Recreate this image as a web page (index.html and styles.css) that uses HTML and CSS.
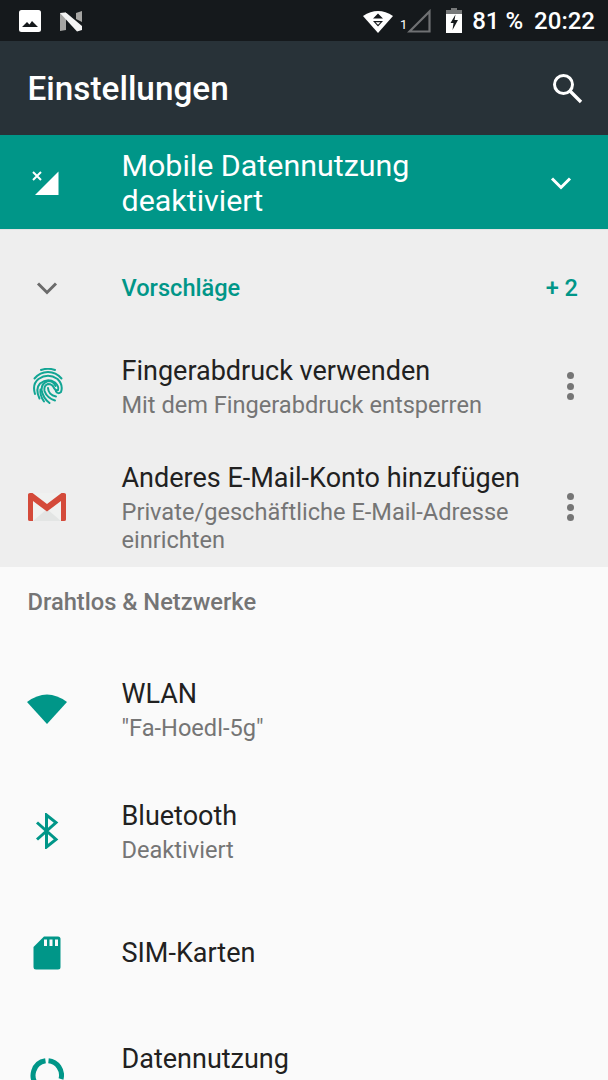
FILE: index.html
```html
<!DOCTYPE html>
<html lang="de">
<head>
    <meta charset="UTF-8">
    <meta name="viewport" content="width=device-width, initial-scale=1.0">
    <title>Einstellungen</title>
    <link rel="stylesheet" href="styles.css">
</head>
<body>
    <div class="statusbar">
        <div class="status-left">
            <svg class="st-img" width="24" height="24" viewBox="0 0 24 24">
                <rect x="1" y="1" width="22" height="22" rx="2.5" fill="#fff"/>
                <path d="M4 18l5-5 2.500 2.500 2.500-3.500 6 6z" fill="#15191c"/>
            </svg>
            <svg class="st-n" width="26" height="22" viewBox="0 0 26 22">
                <path d="M2 3l6-1v18l-6 1z" fill="#a5a5a3"/>
                <path d="M18 3l6-2v11l-6-3z" fill="#a5a5a3"/>
                <path d="M2 3h6.500l15.500 13v4l-5 1.500z" fill="#f4f4f4"/>
            </svg>
        </div>
        <div class="status-right">
            <svg width="30" height="24" viewBox="0 0 30 24">
                <path d="M0 7Q15-3 30 7L15 24z" fill="#fff"/>
                <path d="M15 4.500l5 5H10zM10 12h10l-5 5.500z" fill="#15191c"/>
                <path d="M12.500 13.200h5L15 15.800z" fill="#fff"/>
            </svg>
            <span class="sim-no">1</span>
            <svg class="st-signal" width="24" height="24" viewBox="0 0 24 24">
                <path d="M2.500 22.500L22.500 2.500v20z" fill="none" stroke="#6f7173" stroke-width="2.200"/>
            </svg>
            <svg class="st-batt" width="16" height="25" viewBox="0 0 16 25">
                <path d="M5 0h6v2h5v6H0V2h5z" fill="#77797a"/>
                <rect y="6" width="16" height="19" fill="#fff"/>
                <path d="M9.500 6.500L4.500 15h3l-1 7 5.500-10H8.500z" fill="#15191c"/>
            </svg>
            <span class="st-text st-pct">81 %</span>
            <span class="st-text st-time">20:22</span>
        </div>
    </div>

    <div class="appbar">
        <h1>Einstellungen</h1>
        <svg width="34" height="34" viewBox="0 0 34 34">
            <circle cx="13.500" cy="13.500" r="9" fill="none" stroke="#fff" stroke-width="3"/>
            <path d="M20 20l11 11" stroke="#fff" stroke-width="3.400"/>
        </svg>
    </div>

    <div class="condition">
        <div class="icon-col">
            <svg width="28" height="26" viewBox="0 0 28 26">
                <path d="M26.500 1.500v23.500H3z" fill="#fff"/>
                <path d="M1 2l8 8M9 2l-8 8" stroke="#fff" stroke-width="2"/>
            </svg>
        </div>
        <div class="condition-text">Mobile Datennutzung<br>deaktiviert</div>
        <svg class="condition-chevron" width="22" height="14" viewBox="0 0 22 14">
            <path d="M2 2.500l9 9 9-9" fill="none" stroke="#fff" stroke-width="3"/>
        </svg>
    </div>

    <div class="suggestions">
        <div class="sugg-head">
            <div class="icon-col">
                <svg width="22" height="14" viewBox="0 0 22 14">
                    <path d="M2 2.500l9 9 9-9" fill="none" stroke="#6b6b6b" stroke-width="3"/>
                </svg>
            </div>
            <div class="sugg-label">Vorschläge</div>
            <div class="sugg-count">+ 2</div>
        </div>

        <div class="row sugg-row sugg-finger">
            <div class="icon-col">
                <svg width="30" height="36" viewBox="0 0 30 36" fill="none" stroke="#12a594" stroke-width="2" stroke-linecap="round">
                    <path d="M8 2Q15 -.5 22 2"/>
                    <path d="M1.500 10.500Q7 4 15 4T28.500 10.500"/>
                    <path d="M2 26Q-1 16 5.500 11 15 4.500 24.500 11 30.500 17 28 24 25 26.500 23 23.500"/>
                    <path d="M6.500 30.500Q2 21 7 15.500 14.500 9.500 22 14.500 26.500 19 25 22 22.500 23 21 20 19.500 16 15 16 10.500 17.500 11.500 23 14 30 22 32.500"/>
                    <path d="M11 33.500Q6.500 27 7.500 21.500"/>
                    <path d="M16.500 35Q10 30 8.500 22 8.500 15 15 13 20.500 13 22.500 18"/>
                    <path d="M15 20Q15.500 27 23 28.500"/>
                </svg>
            </div>
            <div class="row-text">
                <div class="row-title">Fingerabdruck verwenden</div>
                <div class="row-sub">Mit dem Fingerabdruck entsperren</div>
            </div>
            <div class="dots"><i></i><i></i><i></i></div>
        </div>

        <div class="row sugg-row sugg-mail">
            <div class="icon-col">
                <svg width="38" height="28" viewBox="0 0 38 28">
                    <rect x="0" y="0" width="38" height="28" rx="1.500" fill="#f0f1f0"/>
                    <path d="M5 28L19 16l14 12z" fill="#e3e5e4"/>
                    <path d="M0 1.500Q0 0 2 0h2.500L19 11 33.500 0H36q2 0 2 1.500V26.500q0 1.500-2 1.500h-3V8L19 18.500 5 8v20H2q-2 0-2-1.500z" fill="#d44a3a"/>
                </svg>
            </div>
            <div class="row-text">
                <div class="row-title">Anderes E-Mail-Konto hinzufügen</div>
                <div class="row-sub">Private/geschäftliche E-Mail-Adresse<br>einrichten</div>
            </div>
            <div class="dots"><i></i><i></i><i></i></div>
        </div>
    </div>

    <div class="section-head">Drahtlos &amp; Netzwerke</div>

    <div class="row list-row row-wlan">
        <div class="icon-col">
            <svg width="40" height="32" viewBox="0 0 40 32">
                <path d="M0 9Q20-6 40 9L20 31z" fill="#009688"/>
            </svg>
        </div>
        <div class="row-text">
            <div class="row-title">WLAN</div>
            <div class="row-sub">"Fa-Hoedl-5g"</div>
        </div>
    </div>

    <div class="row list-row row-bt">
        <div class="icon-col">
            <svg width="24" height="36" viewBox="0 0 24 36">
                <path d="M2 9.500l19 17L11.500 34V2L21 9.500 2 26.500" fill="none" stroke="#009688" stroke-width="3"/>
            </svg>
        </div>
        <div class="row-text">
            <div class="row-title">Bluetooth</div>
            <div class="row-sub">Deaktiviert</div>
        </div>
    </div>

    <div class="row list-row row-sim">
        <div class="icon-col">
            <svg width="28" height="34" viewBox="0 0 28 34">
                <path d="M11 .5h14q2.500 0 2.500 2.500v28q0 2.500-2.500 2.500H3q-2.500 0-2.500-2.500V11z" fill="#009688"/>
                <path d="M11 3.500h3v6.500h-3zM16.500 3.500h3v6.500h-3zM22 3.500h3v6.500h-3z" fill="#fafafa"/>
            </svg>
        </div>
        <div class="row-text">
            <div class="row-title">SIM-Karten</div>
        </div>
    </div>

    <div class="row list-row row-data">
        <div class="icon-col">
            <svg width="34" height="34" viewBox="0 0 34 34" fill="none" stroke="#009688" stroke-width="5">
                <path d="M15.500 2.800A14.500 14.500 0 0 0 8 28"/>
                <path d="M18.500 2.800A14.500 14.500 0 0 1 31 21"/>
            </svg>
        </div>
        <div class="row-text">
            <div class="row-title">Datennutzung</div>
        </div>
    </div>
</body>
</html>
```

FILE: styles.css
```css
/* General styles */
html, body {
    margin: 0;
    padding: 0;
    height: 1080px;
    overflow: hidden;
}
body {
    font-family: Roboto, sans-serif;
    background-color: #fafafa;
    color: #212121;
}
svg {
    display: block;
}

/* Status bar */
.statusbar {
    height: 41px;
    background-color: #15191c;
    display: flex;
    justify-content: space-between;
    align-items: center;
    padding: 0 13px 0 18px;
}
.status-left, .status-right {
    display: flex;
    align-items: center;
}
.st-n {
    margin-left: 16px;
}
.sim-no {
    color: #fff;
    font-size: 13px;
    margin: 8px 0 0 7px;
}
.st-batt {
    margin-left: 15px;
}
.st-text {
    color: #fff;
    font-size: 24px;
    font-weight: 500;
}
.st-pct {
    margin-left: 10px;
}
.st-time {
    margin-left: 11px;
}

/* App bar */
.appbar {
    height: 94px;
    background-color: #283238;
    display: flex;
    justify-content: space-between;
    align-items: center;
    padding: 0 24px 0 27.500px;
    box-sizing: border-box;
}
.appbar h1 {
    margin: 0;
    color: #fff;
    font-size: 33.300px;
    font-weight: 500;
}

/* Shared row layout */
.icon-col {
    width: 121.500px;
    flex: none;
    box-sizing: border-box;
    padding-left: 28px;
    display: flex;
}
.row {
    display: flex;
    align-items: center;
    box-sizing: border-box;
}
.row-text {
    flex: 1;
}
.row-title {
    font-size: 27px;
    line-height: 36px;
    margin-bottom: 2px;
    color: #212121;
}
.row-sub {
    font-size: 23.600px;
    line-height: 28px;
    color: #757575;
}

/* Teal condition banner */
.condition {
    height: 94px;
    background-color: #009688;
    display: flex;
    align-items: center;
    padding: 1px 36px 0 0;
    box-sizing: border-box;
}
.condition .icon-col {
    padding-left: 32px;
}
.condition-text {
    flex: 1;
    color: #fff;
    font-size: 30.400px;
    line-height: 35px;
}

/* Suggestions */
.suggestions {
    height: 338px;
    background-color: #eeeeee;
    border-top: 1px solid #e4e4e4;
    box-sizing: border-box;
}
.sugg-head {
    height: 115px;
    display: flex;
    align-items: center;
    padding: 0 30px 0 0;
}
.sugg-head .icon-col {
    padding-left: 36px;
}
.sugg-label {
    flex: 1;
    color: #009688;
    font-size: 23.600px;
    font-weight: 500;
}
.sugg-count {
    color: #009688;
    font-size: 23.600px;
    font-weight: 500;
}
.sugg-row {
    padding-right: 34px;
}
.sugg-finger {
    height: 82px;
}
.sugg-mail {
    height: 140px;
    padding-top: 20px;
}
.sugg-finger .icon-col {
    padding-left: 32.500px;
}
.dots {
    display: flex;
    flex-direction: column;
    gap: 3.300px;
    flex: none;
}
.dots i {
    display: block;
    width: 7px;
    height: 7px;
    border-radius: 50%;
    background-color: #757575;
}

/* Wireless list */
.section-head {
    height: 81px;
    padding: 21px 0 0 27.500px;
    box-sizing: border-box;
    font-size: 23.700px;
    font-weight: 500;
    color: #757575;
}
.list-row {
    height: 122px;
    flex: none;
}
.row-wlan .icon-col {
    padding-left: 27px;
}
.row-bt .icon-col {
    padding-left: 35px;
}
.row-sim .icon-col {
    padding-left: 33px;
}
.row-sim .row-title {
    margin-bottom: 0;
}
.row-data .icon-col {
    padding-left: 30px;
}
.row-data .row-text {
    padding-bottom: 30px;
}
```
